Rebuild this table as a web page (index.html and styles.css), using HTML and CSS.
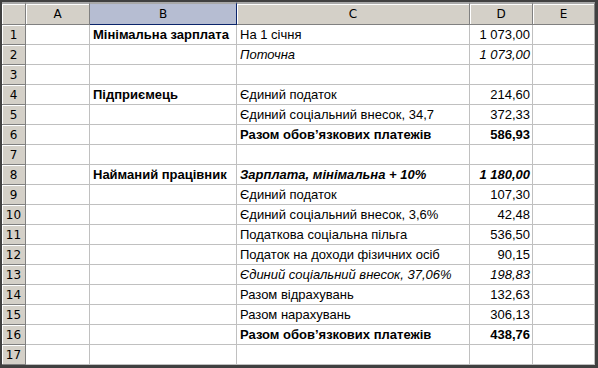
FILE: index.html
```html
<!DOCTYPE html>
<html lang="uk">
<head>
<meta charset="utf-8">
<title>Зарплата</title>
<link rel="stylesheet" href="styles.css">
</head>
<body>
<div class="frame">
  <div class="grid">
    <div class="corner"></div>
    <div class="colhead">A</div>
    <div class="colhead sel">B</div>
    <div class="colhead">C</div>
    <div class="colhead">D</div>
    <div class="colhead">E</div>

    <div class="rowhead">1</div><div class="cell"></div><div class="cell b">Мінімальна зарплата</div><div class="cell">На 1 січня</div><div class="cell num">1 073,00</div><div class="cell"></div>
    <div class="rowhead">2</div><div class="cell"></div><div class="cell"></div><div class="cell i">Поточна</div><div class="cell num i">1 073,00</div><div class="cell"></div>
    <div class="rowhead">3</div><div class="cell"></div><div class="cell"></div><div class="cell"></div><div class="cell"></div><div class="cell"></div>
    <div class="rowhead">4</div><div class="cell"></div><div class="cell b">Підприємець</div><div class="cell">Єдиний податок</div><div class="cell num">214,60</div><div class="cell"></div>
    <div class="rowhead">5</div><div class="cell"></div><div class="cell"></div><div class="cell">Єдиний соціальний внесок, 34,7</div><div class="cell num">372,33</div><div class="cell"></div>
    <div class="rowhead">6</div><div class="cell"></div><div class="cell"></div><div class="cell b">Разом обов’язкових платежів</div><div class="cell num b">586,93</div><div class="cell"></div>
    <div class="rowhead">7</div><div class="cell"></div><div class="cell"></div><div class="cell"></div><div class="cell"></div><div class="cell"></div>
    <div class="rowhead">8</div><div class="cell"></div><div class="cell b">Найманий працівник</div><div class="cell b i">Зарплата, мінімальна + 10%</div><div class="cell num b i">1 180,00</div><div class="cell"></div>
    <div class="rowhead">9</div><div class="cell"></div><div class="cell"></div><div class="cell">Єдиний податок</div><div class="cell num">107,30</div><div class="cell"></div>
    <div class="rowhead">10</div><div class="cell"></div><div class="cell"></div><div class="cell">Єдиний соціальний внесок, 3,6%</div><div class="cell num">42,48</div><div class="cell"></div>
    <div class="rowhead">11</div><div class="cell"></div><div class="cell"></div><div class="cell">Податкова соціальна пільга</div><div class="cell num">536,50</div><div class="cell"></div>
    <div class="rowhead">12</div><div class="cell"></div><div class="cell"></div><div class="cell">Податок на доходи фізичних осіб</div><div class="cell num">90,15</div><div class="cell"></div>
    <div class="rowhead">13</div><div class="cell"></div><div class="cell"></div><div class="cell i">Єдиний соціальний внесок, 37,06%</div><div class="cell num i">198,83</div><div class="cell"></div>
    <div class="rowhead">14</div><div class="cell"></div><div class="cell"></div><div class="cell">Разом відрахувань</div><div class="cell num">132,63</div><div class="cell"></div>
    <div class="rowhead">15</div><div class="cell"></div><div class="cell"></div><div class="cell">Разом нарахувань</div><div class="cell num">306,13</div><div class="cell"></div>
    <div class="rowhead">16</div><div class="cell"></div><div class="cell"></div><div class="cell b">Разом обов’язкових платежів</div><div class="cell num b">438,76</div><div class="cell"></div>
    <div class="rowhead">17</div><div class="cell"></div><div class="cell"></div><div class="cell"></div><div class="cell"></div><div class="cell"></div>
  </div>
</div>
</body>
</html>
```

FILE: styles.css
```css
html, body {
  margin: 0;
  padding: 0;
  background: #fff;
}

.frame {
  width: 598px;
  height: 368px;
  box-sizing: border-box;
  border-top: 2px solid #404040;
  border-left: 2px solid #404040;
  border-right: 3px solid #404040;
  border-bottom: 3px solid #404040;
  background: #fff;
  overflow: hidden;
}

.grid {
  display: grid;
  grid-template-columns: 24px 64px 147px 233px 63px 62px;
  grid-template-rows: 23px repeat(17, 20px);
  font-family: "Liberation Sans", Arial, sans-serif;
  font-size: 13px;
  color: #000;
}

.corner,
.colhead,
.rowhead {
  background: #d4d0c8;
  box-sizing: border-box;
  border-right: 1px solid #808080;
  border-bottom: 1px solid #808080;
  box-shadow: inset 1px 1px 0 #fff;
  font-family: "DejaVu Sans", Tahoma, sans-serif;
  font-size: 12px;
  display: flex;
  align-items: center;
  justify-content: center;
}

.colhead,
.corner {
  border-top: 2px solid #a8a8a8;
}

.colhead.sel {
  background: #b6bdd2;
  border-right-color: #0a246a;
  border-bottom-color: #0a246a;
  box-shadow: none;
}

.rowhead {
  padding-top: 1px;
}

.cell {
  box-sizing: border-box;
  border-right: 1px solid #c0c0c0;
  border-bottom: 1px solid #c0c0c0;
  padding: 0 2px 2px 3px;
  display: flex;
  align-items: flex-end;
  white-space: nowrap;
  overflow: hidden;
  line-height: 15px;
}

.num {
  justify-content: flex-end;
}

.b {
  font-weight: bold;
}

.i {
  font-style: italic;
}
```
